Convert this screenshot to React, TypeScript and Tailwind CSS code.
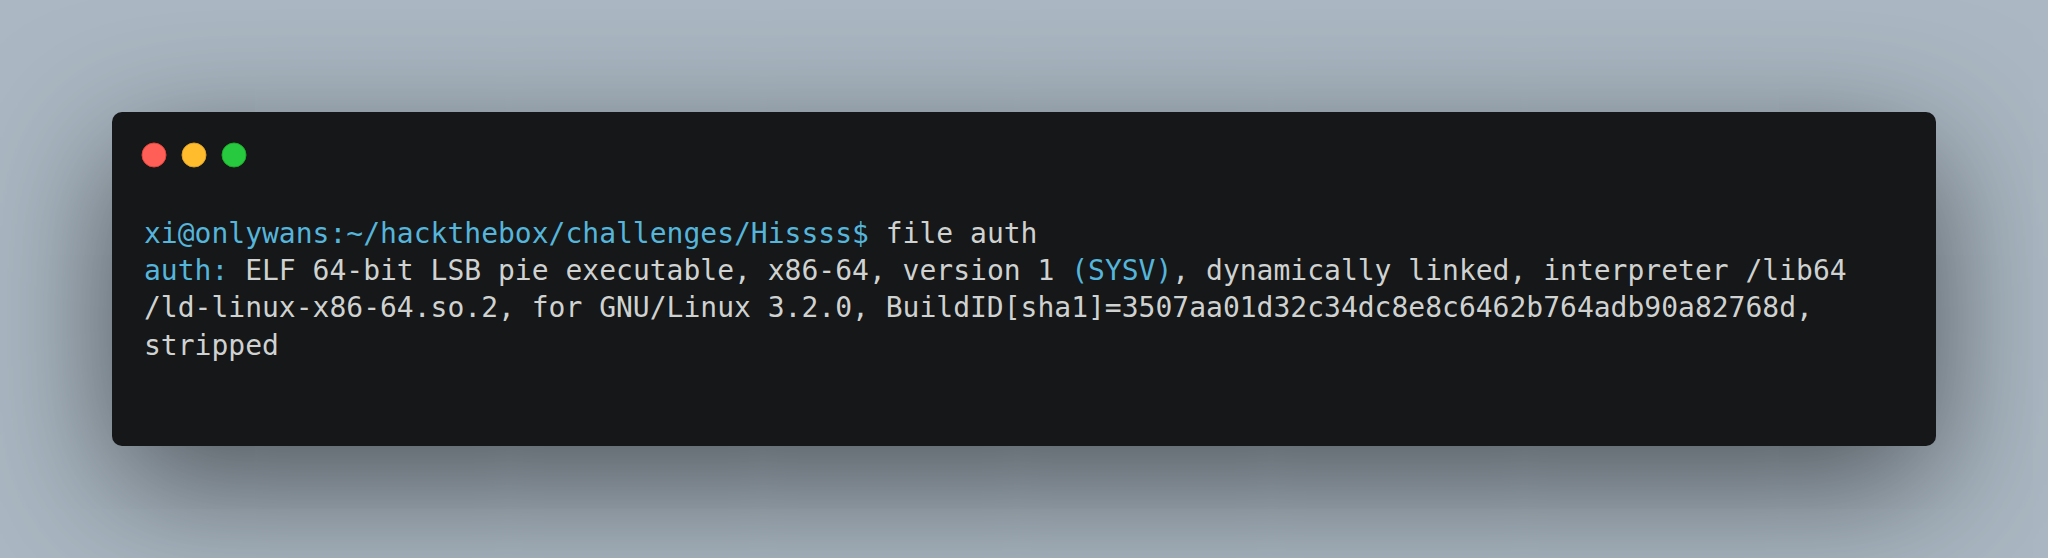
import React from "react";

export default function App() {
  return (
    <div className="w-[2048px] h-[558px] bg-[#abb8c3] p-[112px] flex">
      <div className="flex-1 h-[334px] rounded-[10px] bg-[#151718] shadow-[0_40px_136px_rgba(0,0,0,0.55)] pt-[29px] pl-[28px] pr-[32px] flex flex-col">
        <svg width="108" height="28" viewBox="0 0 54 14" className="block">
          <g fill="none" fillRule="evenodd" transform="translate(1 1)">
            <circle cx="6" cy="6" r="6" fill="#FF5F56" stroke="#E0443E" strokeWidth=".5" />
            <circle cx="26" cy="6" r="6" fill="#FFBD2E" stroke="#DEA123" strokeWidth=".5" />
            <circle cx="46" cy="6" r="6" fill="#27C93F" stroke="#1AAB29" strokeWidth=".5" />
          </g>
        </svg>
        <div className="mt-[46px] pl-[4px] font-['DejaVu_Sans_Mono',monospace] text-[28px] leading-[37.24px] text-[#cfd2d1] whitespace-pre">
          <div>
            <span className="text-[#55b5db]">xi@onlywans:~/hackthebox/challenges/Hissss$</span> file auth
          </div>
          <div>
            <span className="text-[#55b5db]">auth:</span> ELF 64-bit LSB pie executable, x86-64, version 1{" "}
            <span className="text-[#55b5db]">(SYSV)</span>, dynamically linked, interpreter /lib64
          </div>
          <div>/ld-linux-x86-64.so.2, for GNU/Linux 3.2.0, BuildID[sha1]=3507aa01d32c34dc8e8c6462b764adb90a82768d,</div>
          <div>stripped</div>
        </div>
      </div>
    </div>
  );
}
